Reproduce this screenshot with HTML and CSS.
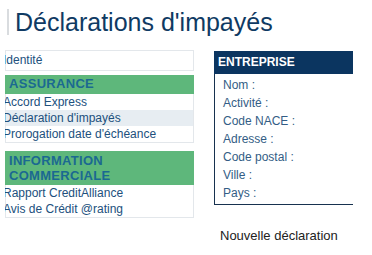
FILE: index.html
```html
<!DOCTYPE html>
<html lang="fr">
<head>
<meta charset="utf-8">
<title>Déclarations d'impayés</title>
<link rel="stylesheet" href="styles.css">
</head>
<body>
<h1 class="page-title">Déclarations d'impayés</h1>
<div class="layout">
  <nav class="side">
    <div class="box single"><span class="item">Identité</span></div>
    <div class="section">
      <div class="sec-head">ASSURANCE</div>
      <div class="box list">
        <span class="item">Accord Express</span>
        <span class="item active">Déclaration d'impayés</span>
        <span class="item">Prorogation date d'échéance</span>
      </div>
    </div>
    <div class="section">
      <div class="sec-head two">INFORMATION COMMERCIALE</div>
      <div class="box list">
        <span class="item">Rapport CreditAlliance</span>
        <span class="item">Avis de Crédit @rating</span>
      </div>
    </div>
  </nav>
  <div class="main">
    <div class="card">
      <div class="card-head">ENTREPRISE</div>
      <div class="card-body">
        <div class="row">Nom :</div>
        <div class="row">Activité :</div>
        <div class="row">Code NACE :</div>
        <div class="row">Adresse :</div>
        <div class="row">Code postal :</div>
        <div class="row">Ville :</div>
        <div class="row">Pays :</div>
      </div>
    </div>
    <div class="new-decl">Nouvelle déclaration</div>
  </div>
</div>
</body>
</html>
```
FILE: styles.css
```css
html, body {
  margin: 0;
  padding: 0;
  background: #ffffff;
  font-family: "Liberation Sans", Arial, sans-serif;
}
body {
  width: 372px;
  height: 255px;
  overflow: hidden;
}
.page-title {
  margin: 9px 0 0 7px;
  padding-left: 6px;
  border-left: 2px solid #d9dcdf;
  font-size: 25px;
  line-height: 26px;
  font-weight: normal;
  color: #0f3a63;
}
.layout {
  display: flex;
  gap: 20px;
  margin-top: 15px;
  padding-left: 5px;
}
.side {
  width: 189px;
  overflow: hidden;
  display: flex;
  flex-direction: column;
}
.box {
  border: 1px solid #e3e7eb;
  background: #fff;
}
.box.list {
  border-top: none;
}
.item {
  display: block;
  margin-left: -3px;
  padding-left: 0;
  font-size: 12px;
  line-height: 16px;
  color: #21507d;
  white-space: nowrap;
}
.single .item {
  line-height: 19px;
}
.item.active {
  background: #e7edf2;
  margin-left: 0;
  padding-left: 0;
  text-indent: -3px;
}
.section {
  margin-top: 4px;
}
.side > .section:first-of-type {
  margin-top: 4px;
}
.section + .section {
  margin-top: 8px;
}
.sec-head {
  background: #5eb77b;
  color: #1b6991;
  font-weight: bold;
  font-size: 13px;
  letter-spacing: 0.3px;
  line-height: 17px;
  padding: 0 4px 2px 4px;
}
.sec-head.two {
  line-height: 15px;
  padding: 2px 4px 2px 4px;
}
.main {
  width: 139px;
  margin-top: 1px;
}
.card-head {
  background: #0b3560;
  color: #ffffff;
  font-weight: bold;
  font-size: 12px;
  line-height: 23px;
  padding-left: 4px;
}
.card-body {
  border-left: 1px solid #17324f;
  border-bottom: 1px solid #17324f;
  padding: 2px 0 2px 8px;
}
.row {
  font-size: 12px;
  line-height: 18px;
  color: #335d85;
}
.new-decl {
  margin: 23px 0 0 6px;
  font-size: 13px;
  line-height: 15px;
  color: #222222;
}
```
